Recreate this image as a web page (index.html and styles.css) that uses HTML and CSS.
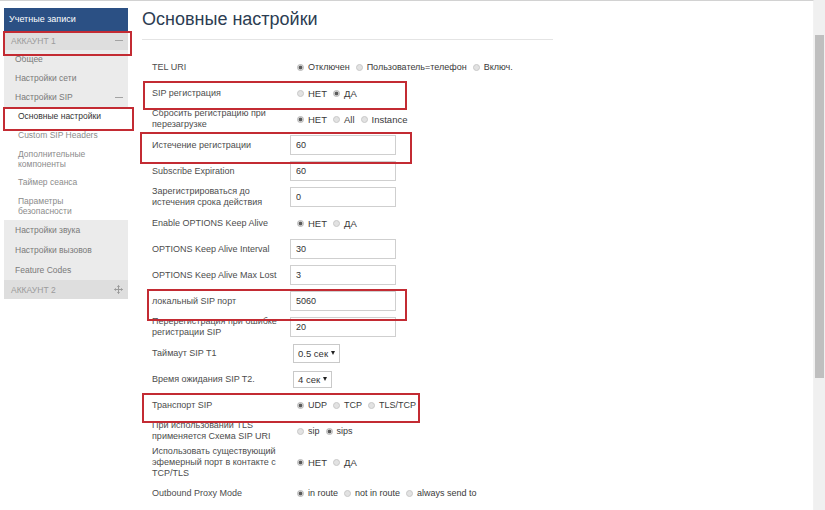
FILE: index.html
```html
<!DOCTYPE html>
<html lang="ru">
<head>
<meta charset="utf-8">
<title>Основные настройки</title>
<link rel="stylesheet" href="styles.css">
</head>
<body>
<div class="page">
  <div class="viewport">
    <nav class="sidebar">
      <div class="sb-head">Учетные записи</div>
      <div class="acc hl hl-acc1"><span>Аккаунт 1</span><span class="minus"></span></div>
      <div class="item">Общее</div>
      <div class="item">Настройки сети</div>
      <div class="item"><span>Настройки SIP</span><span class="minus"></span></div>
      <div class="sub active hl hl-main">Основные настройки</div>
      <div class="sub">Custom SIP Headers</div>
      <div class="sub two">Дополнительные<br>компоненты</div>
      <div class="sub">Таймер сеанса</div>
      <div class="sub two">Параметры<br>безопасности</div>
      <div class="item lo">Настройки звука</div>
      <div class="item lo">Настройки вызовов</div>
      <div class="item lo">Feature Codes</div>
      <div class="acc acc2"><span>Аккаунт 2</span>
        <svg class="plus" width="9" height="9" viewBox="0 0 9 9"><path d="M4.5 0.5V8.5M0.5 4.5H8.5M3.3 1.7L4.5 0.5L5.7 1.7M3.3 7.3L4.5 8.5L5.7 7.3M1.7 3.3L0.5 4.5L1.7 5.7M7.3 3.3L8.5 4.5L7.3 5.7" fill="none" stroke="#9a9a9a" stroke-width="1"/></svg>
      </div>
    </nav>
    <main class="main">
      <h1 class="title">Основные настройки</h1>
      <hr class="rule">
      <div class="form">
        <div class="row">
          <div class="lbl">TEL URI</div>
          <div class="radios"><span class="opt"><span class="rb on"></span>Отключен</span><span class="opt"><span class="rb"></span>Пользователь=телефон</span><span class="opt"><span class="rb"></span>Включ.</span></div>
        </div>
        <div class="row hl hl-r1">
          <div class="lbl">SIP регистрация</div>
          <div class="radios big"><span class="opt"><span class="rb"></span>НЕТ</span><span class="opt"><span class="rb on"></span>ДА</span></div>
        </div>
        <div class="row">
          <div class="lbl">Сбросить регистрацию при<br>перезагрузке</div>
          <div class="radios big"><span class="opt"><span class="rb on"></span>НЕТ</span><span class="opt"><span class="rb"></span>All</span><span class="opt"><span class="rb"></span>Instance</span></div>
        </div>
        <div class="row hl hl-r2">
          <div class="lbl">Истечение регистрации</div>
          <input class="inp" type="text" value="60">
        </div>
        <div class="row">
          <div class="lbl">Subscribe Expiration</div>
          <input class="inp" type="text" value="60">
        </div>
        <div class="row">
          <div class="lbl">Зарегистрироваться до<br>истечения срока действия</div>
          <input class="inp" type="text" value="0">
        </div>
        <div class="row">
          <div class="lbl">Enable OPTIONS Keep Alive</div>
          <div class="radios big"><span class="opt"><span class="rb on"></span>НЕТ</span><span class="opt"><span class="rb"></span>ДА</span></div>
        </div>
        <div class="row">
          <div class="lbl">OPTIONS Keep Alive Interval</div>
          <input class="inp" type="text" value="30">
        </div>
        <div class="row">
          <div class="lbl">OPTIONS Keep Alive Max Lost</div>
          <input class="inp" type="text" value="3">
        </div>
        <div class="row hl hl-r3">
          <div class="lbl">локальный SIP порт</div>
          <input class="inp" type="text" value="5060">
        </div>
        <div class="row">
          <div class="lbl">Перерегистрация при ошибке<br>регистрации SIP</div>
          <input class="inp" type="text" value="20">
        </div>
        <div class="row">
          <div class="lbl">Таймаут SIP T1</div>
          <div class="sel s1">0.5 сек</div>
        </div>
        <div class="row">
          <div class="lbl">Время ожидания SIP T2.</div>
          <div class="sel s2">4 сек</div>
        </div>
        <div class="row hl hl-r4">
          <div class="lbl">Транспорт SIP</div>
          <div class="radios"><span class="opt"><span class="rb on"></span>UDP</span><span class="opt"><span class="rb"></span>TCP</span><span class="opt"><span class="rb"></span>TLS/TCP</span></div>
        </div>
        <div class="row">
          <div class="lbl">При использовании TLS<br>применяется Схема SIP URI</div>
          <div class="radios"><span class="opt"><span class="rb"></span>sip</span><span class="opt"><span class="rb on"></span>sips</span></div>
        </div>
        <div class="row tall">
          <div class="lbl">Использовать существующий<br>эфемерный порт в контакте с<br>TCP/TLS</div>
          <div class="radios big"><span class="opt"><span class="rb on"></span>НЕТ</span><span class="opt"><span class="rb"></span>ДА</span></div>
        </div>
        <div class="row">
          <div class="lbl">Outbound Proxy Mode</div>
          <div class="radios"><span class="opt"><span class="rb on"></span>in route</span><span class="opt"><span class="rb"></span>not in route</span><span class="opt"><span class="rb"></span>always send to</span></div>
        </div>
      </div>
    </main>
  </div>
  <div class="scrollbar"><div class="thumb"></div></div>
</div>
</body>
</html>
```
FILE: styles.css
```css
* { box-sizing: border-box; }
html, body { margin: 0; padding: 0; }
body {
  font-family: "Liberation Sans", Arial, sans-serif;
  background: #fff;
  color: #333;
  width: 825px;
  height: 510px;
  overflow: hidden;
}
.page { display: flex; height: 510px; }
.viewport {
  flex: 1;
  min-width: 0;
  display: flex;
  align-items: flex-start;
  padding-top: 7px;
  border-top: 1px solid #d2d2d2;
  border-right: 1px solid #f2f2f2;
}
.scrollbar { flex: none; width: 11px; background: #f0f0f0; padding-top: 35px; }
.thumb { margin-left: 1px; width: 9px; height: 343px; background: #bfbfbf; }

/* sidebar */
.sidebar { flex: none; margin-left: 4px; width: 124px; font-size: 8.5px; }
.sb-head {
  background: #2b5084;
  color: #fff;
  font-size: 9px;
  height: 23px;
  line-height: 23px;
  padding-left: 5px;
}
.acc {
  background: #dedede;
  color: #9b9b9b;
  text-transform: uppercase;
  height: 19px;
  padding: 0 5px 0 7px;
  display: flex;
  justify-content: space-between;
  align-items: center;
}
.item {
  background: #ebebeb;
  color: #7a7a7a;
  padding: 4px 5px 4px 11px;
  line-height: 11px;
  display: flex;
  justify-content: space-between;
  align-items: center;
}
.item.lo { line-height: 12px; }
.sub {
  background: #fff;
  color: #8c8c8c;
  padding: 4px 0 4px 14px;
  line-height: 11px;
}
.sub.two { line-height: 10px; }
.sub.active { color: #333; }
.minus { width: 8px; height: 1.5px; background: #a3a3a3; }
.plus { display: block; }

/* red annotation frames */
.hl { position: relative; }
.hl::after {
  content: "";
  position: absolute;
  border: 2px solid #c32b33;
  pointer-events: none;
}
.hl-acc1::after { top: 0; left: -1px; width: 125px; height: 21px; }
.hl-main::after { top: 0; left: -1px; width: 127px; height: 20px; }
.hl-r1::after { top: 1px; left: 1px; width: 260px; height: 25px; }
.hl-r2::after { top: 0; left: -2px; width: 268px; height: 28px; }
.hl-r3::after { top: 1px; left: 5px; width: 256px; height: 28px; }
.hl-r4::after { top: 1px; left: 0; width: 274px; height: 26px; }

/* main */
.main { flex: none; margin-left: 14px; width: 412px; }
.title {
  margin: 0;
  font-size: 18px;
  line-height: 22px;
  font-weight: normal;
  color: #2c3d52;
}
.rule { margin: 9px 0 14px; border: 0; border-top: 1px solid #e4e4e4; width: 411px; }
.row {
  display: flex;
  align-items: center;
  min-height: 26px;
  padding-left: 10px;
}
.row.tall { min-height: 36px; }
.lbl {
  width: 138px;
  flex: none;
  font-size: 9px;
  line-height: 11px;
  color: #4d4d4d;
  white-space: nowrap;
}
.inp {
  width: 106px;
  height: 20px;
  border: 1px solid #cfcfcf;
  padding: 0 0 0 5px;
  margin: 0;
  font-family: inherit;
  font-size: 9px;
  color: #333;
  background: #fff;
  outline: none;
}
.radios {
  display: flex;
  align-items: center;
  margin-left: 7px;
  font-size: 9px;
  color: #3a3a3a;
  gap: 6px;
}
.radios.big { font-size: 9.5px; }
.opt { display: flex; align-items: center; gap: 4px; }
.rb {
  width: 7px;
  height: 7px;
  border-radius: 50%;
  background: #e2e2e2;
  border: 1px solid #c9c9c9;
  flex: none;
}
.rb.on { background: radial-gradient(circle, #5a5a5a 0 1.4px, #d6d6d6 2.2px); border-color: #b5b5b5; }
.sel {
  margin-left: 3px;
  display: flex;
  align-items: center;
  justify-content: space-between;
  border: 1px solid #c9c9c9;
  background: #fff;
  font-size: 9.5px;
  color: #333;
  padding: 0 4px 0 4px;
}
.sel::after {
  content: "";
  border-left: 2.5px solid transparent;
  border-right: 2.5px solid transparent;
  border-top: 4px solid #222;
}
.sel.s1 { width: 47px; height: 19px; }
.sel.s2 { width: 39px; height: 17px; }
```
